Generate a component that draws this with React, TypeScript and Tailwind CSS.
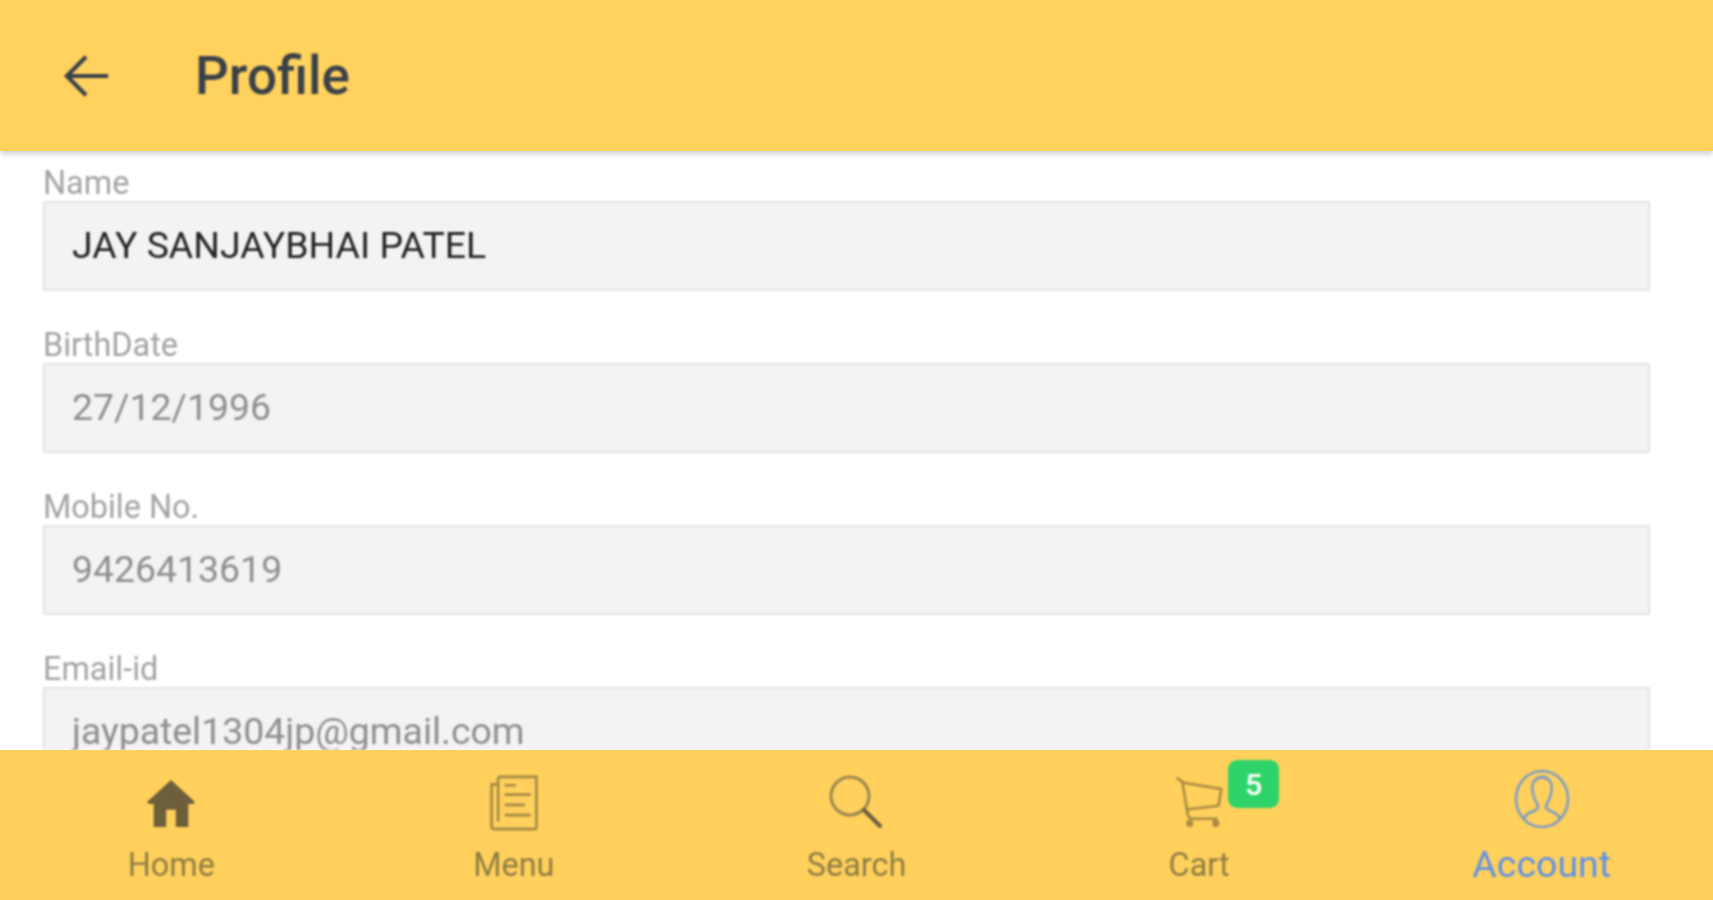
import { ReactNode } from 'react';

const fields = [
  { label: 'Name', value: 'JAY SANJAYBHAI PATEL', active: true },
  { label: 'BirthDate', value: '27/12/1996' },
  { label: 'Mobile No.', value: '9426413619' },
  { label: 'Email-id', value: 'jaypatel1304jp@gmail.com' },
];

function HomeIcon() {
  return (
    <svg viewBox="0 0 52 52" className="mt-[1px] h-[50px] w-[52px]" fill="#6e5f3b">
      <path d="M26 2 L51 25 L49 27 H44 V51 H31 V33 H21 V51 H8 V27 H3 L1 25 Z" />
    </svg>
  );
}

function MenuIcon() {
  return (
    <svg viewBox="0 0 52 60" className="mt-[2px] h-[56px] w-[50px] opacity-70" fill="none" stroke="#7d6a3c" strokeWidth="2.8">
      <path d="M9 2 H50 V56 Q50 58 48 58 H5 Q2 58 2 55 V10 H9" />
      <path d="M9 2 V50" />
      <path d="M16 11 H28 M16 21 H44 M16 32 H38 M16 43 H44" />
    </svg>
  );
}

function SearchIcon() {
  return (
    <svg viewBox="0 0 56 56" className="h-[56px] w-[56px]" fill="none" strokeLinecap="round">
      <circle cx="22" cy="22" r="19" stroke="#9a8650" strokeWidth="3" />
      <path d="M36 36 L52 52" stroke="#6b5d3c" strokeWidth="4" />
    </svg>
  );
}

function CartIcon() {
  return (
    <svg viewBox="0 0 52 56" className="h-[52px] w-[50px]" fill="none" stroke="#a98a42" strokeWidth="2.8" strokeLinejoin="round">
      <path d="M2 2 L8 6 L14 42 Q15 46 19 46 H46" />
      <path d="M8 7 L50 14 L47 32 L12 36" />
      <circle cx="16" cy="51" r="2.5" fill="#a98a42" />
      <circle cx="44" cy="51" r="2.5" fill="#a98a42" />
    </svg>
  );
}

function AccountIcon() {
  return (
    <svg viewBox="0 0 56 60" className="-mt-[6px] h-[60px] w-[56px]" fill="none" stroke="#7f9bc4" strokeWidth="2.6">
      <ellipse cx="28" cy="30" rx="26" ry="28" />
      <path d="M10 50 Q12 44 20 42 L24 39 Q24 35 21 31 Q16 18 20 12 Q28 4 36 12 Q40 18 35 31 Q32 35 32 39 L36 42 Q44 44 46 50" />
    </svg>
  );
}

function Tab({ icon, label, active, badge }: { icon: ReactNode; label: string; active?: boolean; badge?: string }) {
  return (
    <div className="flex flex-col items-center blur-[1px]">
      <div className="relative flex h-[70px] items-center justify-center">
        {icon}
        {badge && (
          <span className="absolute -top-[7px] left-[54px] flex h-[48px] w-[51px] items-center justify-center rounded-[9px] bg-[#2ed469] text-[30px] font-medium text-white">
            {badge}
          </span>
        )}
      </div>
      <span
        className={
          active
            ? 'mt-[5px] text-[37.5px] leading-[44px] text-[#5f90e6]'
            : 'mt-[6px] text-[32.4px] leading-[44px] text-[#8f7c44]'
        }
      >
        {label}
      </span>
    </div>
  );
}

export default function App() {
  return (
    <div className="flex h-screen flex-col overflow-hidden bg-white font-['Roboto',sans-serif]">
      <header className="z-10 flex h-[151px] flex-shrink-0 items-center bg-[#ffd25e] shadow-[0_3px_6px_rgba(0,0,0,0.2)]">
        <svg viewBox="0 0 48 44" className="ml-[64px] h-[44px] w-[46px] blur-[1px]" fill="none" stroke="#38414b" strokeWidth="4.4">
          <path d="M46 22 H4 M23 2 L3 22 L23 42" />
        </svg>
        <h1 className="ml-[85px] mt-[2px] text-[53px] font-medium text-[#3a4148] blur-[1px]">Profile</h1>
      </header>

      <main className="flex min-h-0 flex-1 flex-col gap-[36px] overflow-hidden pt-[14px] pl-[43px] pr-[63px] blur-[1px]">
        {fields.map((f) => (
          <div key={f.label} className="flex-shrink-0">
            <div className="text-[32.4px] leading-[36px] text-[#a3a3a3]">{f.label}</div>
            <div
              className={`flex h-[90px] items-center border-2 border-[#e4e4e4] bg-[#f3f3f3] pb-[1px] pl-[27px] text-[37.4px] ${
                f.active ? 'text-[#222222]' : 'text-[#8e8e8e]'
              }`}
            >
              {f.value}
            </div>
          </div>
        ))}
      </main>

      <nav className="z-10 grid h-[150px] flex-shrink-0 grid-cols-5 bg-[#ffd15c] pt-[17px]">
        <Tab icon={<HomeIcon />} label="Home" />
        <Tab icon={<MenuIcon />} label="Menu" />
        <Tab icon={<SearchIcon />} label="Search" />
        <Tab icon={<CartIcon />} label="Cart" badge="5" />
        <Tab icon={<AccountIcon />} label="Account" active />
      </nav>
    </div>
  );
}
